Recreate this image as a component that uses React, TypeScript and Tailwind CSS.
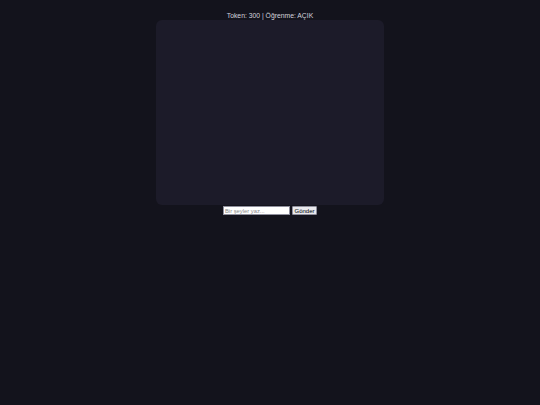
export default function App() {
  return (
    <div className="min-h-[405px] w-full bg-[#13131c] flex flex-col items-center pt-[10px] font-['Liberation_Sans',Arial,sans-serif]">
      <div className="text-[6.8px] leading-[10px] text-[#d4d4dc] translate-y-[0.5px]">Token: 300 | Öğrenme: AÇIK</div>
      <div className="w-[228px] h-[185px] rounded-[6px] bg-[#1c1b29]" />
      <div className="flex items-center gap-[2px] mt-[1px]">
        <input
          placeholder="Bir şeyler yaz..."
          className="w-[67px] h-[9px] bg-white border border-[#8f8f9d] text-[5.8px] px-[1px] text-black placeholder:text-[#8a8a8a] outline-none"
        />
        <button className="h-[9px] w-[25px] bg-[#e9e9ed] border border-[#8f8f9d] rounded-[1px] text-[6px] leading-none text-black flex items-center justify-center">
          Gönder
        </button>
      </div>
    </div>
  )
}
